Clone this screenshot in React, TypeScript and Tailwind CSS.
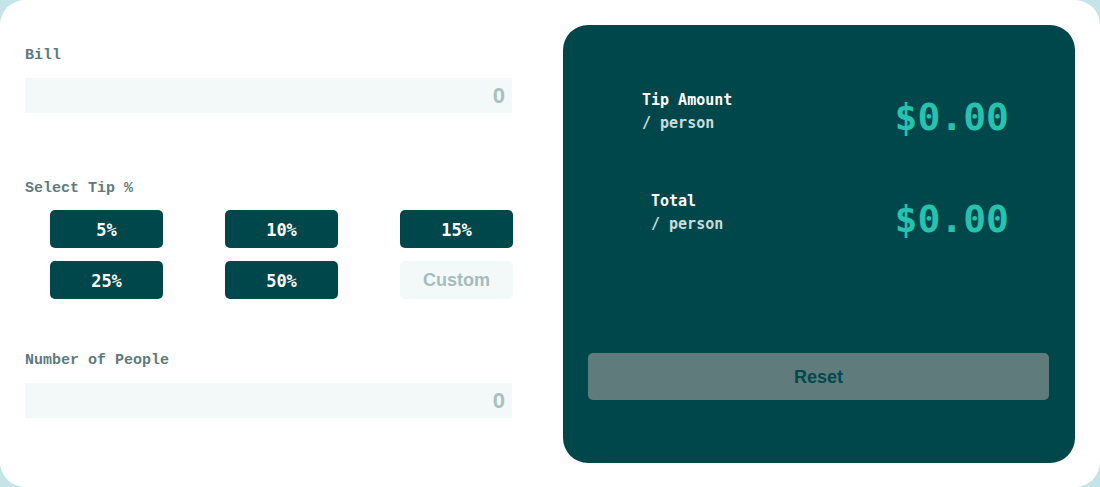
export default function App() {
  const tips = ['5%', '10%', '15%', '25%', '50%'];

  return (
    <div className="w-[1100px] h-[487px] bg-[#c5e4e7]">
      <div className="w-full h-full bg-white rounded-[25px] flex">
        {/* left: inputs */}
        <div className="ml-[25px] w-[487px] pt-[46px]">
          <label className="block text-[15px] leading-[20px] font-bold text-[#5e7a7d] font-['Liberation_Mono',monospace]">Bill</label>
          <div className="mt-[12px] h-[35px] bg-[#f3f8f9] flex items-center justify-end pr-[7px]">
            <span className="text-[22px] font-bold text-[#aac0c0] font-['Liberation_Sans',sans-serif]">0</span>
          </div>

          <label className="block mt-[66px] text-[15px] leading-[20px] font-bold text-[#5e7a7d] font-['Liberation_Mono',monospace]">Select Tip %</label>
          <div className="mt-[11px] pl-[25px] grid grid-cols-[113px_113px_113px] gap-x-[62px] gap-y-[13px]">
            {tips.map((t) => (
              <button
                key={t}
                className="h-[38px] pt-[3px] rounded-[5px] bg-[#00474b] text-white text-[17px] font-bold font-['DejaVu_Sans_Mono',monospace]"
              >
                {t}
              </button>
            ))}
            <button className="h-[38px] pt-[1px] rounded-[5px] bg-[#f3f8f9] text-[#a6bcbc] text-[18px] font-bold font-['Liberation_Sans',sans-serif]">
              Custom
            </button>
          </div>

          <label className="block mt-[52px] text-[15px] leading-[20px] font-bold text-[#5e7a7d] font-['Liberation_Mono',monospace]">Number of People</label>
          <div className="mt-[12px] h-[35px] bg-[#f3f8f9] flex items-center justify-end pr-[7px]">
            <span className="text-[22px] font-bold text-[#aac0c0] font-['Liberation_Sans',sans-serif]">0</span>
          </div>
        </div>

        {/* right: results */}
        <div className="ml-[51px] mt-[25px] w-[512px] h-[438px] bg-[#00474b] rounded-[25px] pt-[64px] font-['DejaVu_Sans_Mono',monospace]">
          <div className="h-[46px] flex justify-between items-start pl-[79px] pr-[66px]">
            <div className="text-[15px] leading-[23px] font-bold">
              <div className="text-white">Tip Amount</div>
              <div className="text-[#c5dcdc]">/ person</div>
            </div>
            <div className="mt-[6px] text-[38px] leading-[44px] font-bold text-[#26c2ae]">$0.00</div>
          </div>

          <div className="mt-[55px] h-[46px] flex justify-between items-start pl-[88px] pr-[66px]">
            <div className="text-[15px] leading-[23px] font-bold">
              <div className="text-white">Total</div>
              <div className="text-[#c5dcdc]">/ person</div>
            </div>
            <div className="mt-[7px] text-[38px] leading-[44px] font-bold text-[#26c2ae]">$0.00</div>
          </div>

          <div className="mt-[117px] ml-[25px] mr-[26px]">
            <button className="w-full h-[47px] pt-[1px] rounded-[5px] bg-[#5f7b7c] text-[#00494d] text-[18px] font-bold font-['Liberation_Sans',sans-serif]">
              Reset
            </button>
          </div>
        </div>
      </div>
    </div>
  );
}
